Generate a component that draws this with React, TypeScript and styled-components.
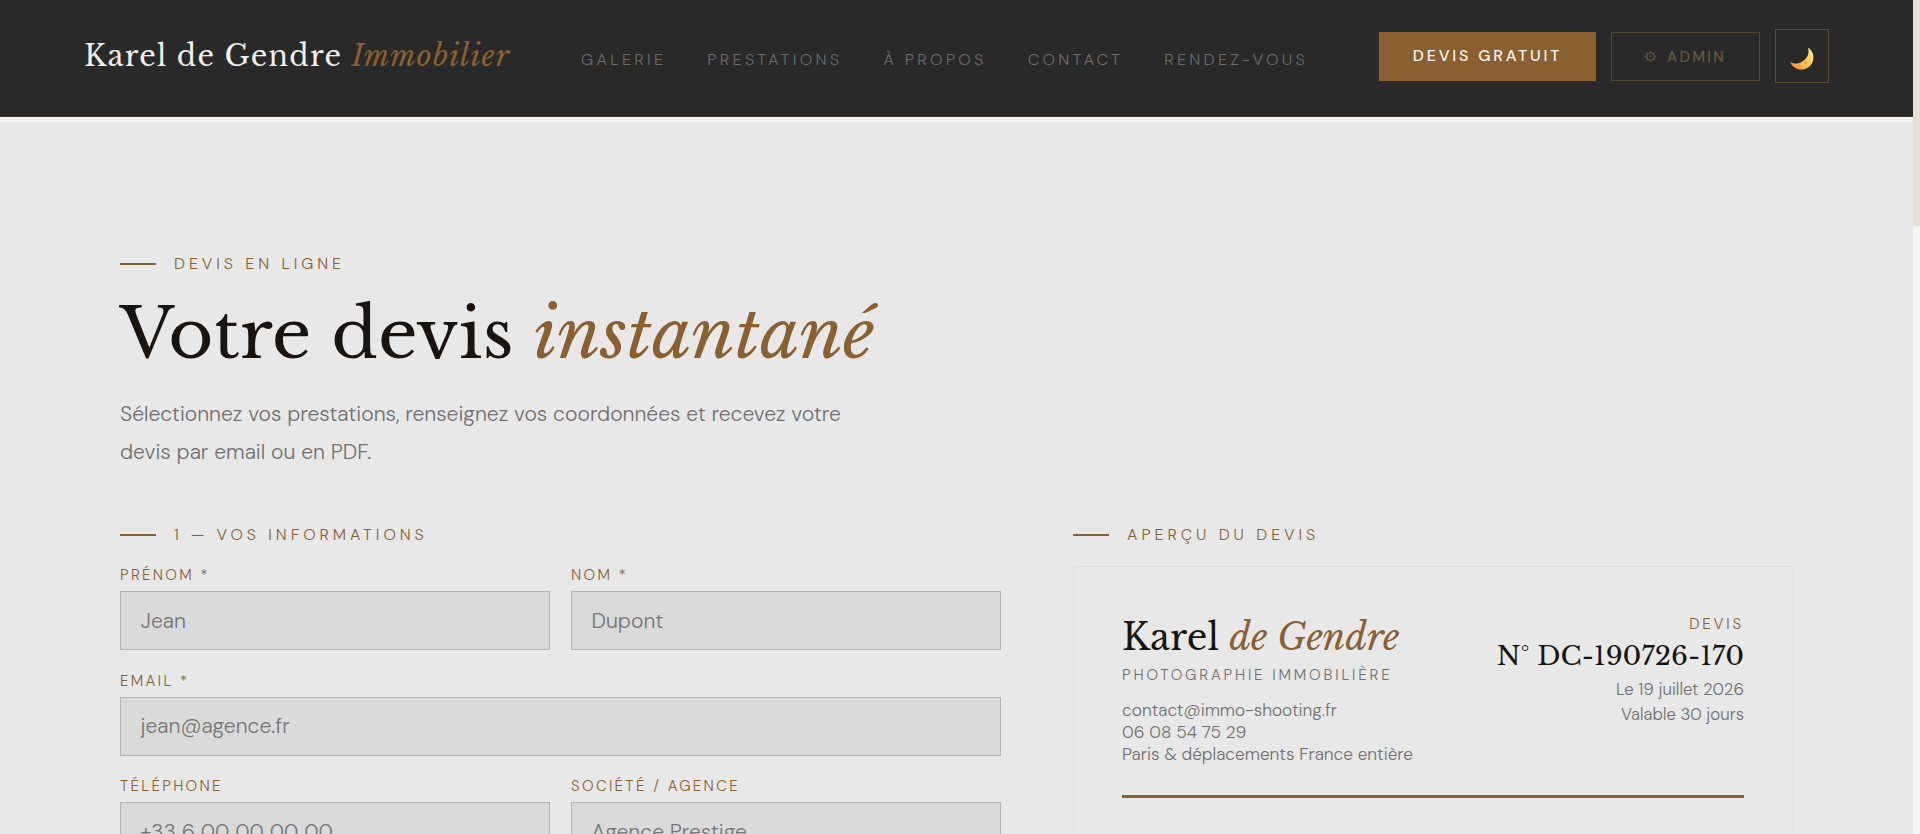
import React from 'react';
import styled, { createGlobalStyle } from 'styled-components';

const sans = '"DM Sans", Inter, "Liberation Sans", sans-serif';
const serif = '"Libre Baskerville", "Liberation Serif", serif';
const bronze = '#8b6030';

const GlobalStyle = createGlobalStyle`
  *, *::before, *::after { box-sizing: border-box; }
  body {
    margin: 0;
    overflow: hidden;
    background: #f5f5f5;
    color: #1a1410;
    font-family: ${sans};
    font-weight: 300;
  }
  h1, p { margin: 0; font-weight: inherit; }
`;

const Screen = styled.div`
  display: grid;
  grid-template-columns: 1fr 7px;
  height: 834px;
  overflow: hidden;
`;

const Page = styled.div`
  display: flex;
  flex-direction: column;
  gap: 5px;
  min-width: 0;
  height: 834px;
  overflow: hidden;
`;

const ScrollRail = styled.div`
  background: #f5f5f5;
`;

const ScrollThumb = styled.div`
  height: 226px;
  background: #e8dfd0;
`;

const Header = styled.header`
  display: flex;
  flex: none;
  align-items: center;
  justify-content: space-between;
  height: 117px;
  padding: 0 84px 4px;
  background: #292929;
  border-bottom: 1px solid #3d342a;
`;

const Brand = styled.a`
  font: 400 28.8px/36px ${serif};
  letter-spacing: 1.15px;
  color: #f0f0f0;
  white-space: nowrap;

  em { color: ${bronze}; }
`;

const Nav = styled.nav`
  display: flex;
  gap: 41px;
  padding-top: 8px;
`;

const NavLink = styled.a`
  font-size: 16.2px;
  line-height: 20px;
  letter-spacing: 3.24px;
  text-transform: uppercase;
  color: #6b6b6b;
  white-space: nowrap;
`;

const Actions = styled.div`
  display: flex;
  align-items: center;
  gap: 15px;
`;

const QuoteButton = styled.a`
  display: flex;
  align-items: center;
  justify-content: center;
  width: 217px;
  height: 49px;
  padding-bottom: 2px;
  background: ${bronze};
  color: #f5f5f5;
  font-size: 16px;
  font-weight: 500;
  letter-spacing: 2.8px;
  text-transform: uppercase;
  white-space: nowrap;
`;

const AdminButton = styled.a`
  display: flex;
  align-items: center;
  gap: 11px;
  width: 149px;
  height: 49px;
  padding: 1px 0 0 33px;
  border: 1px solid #50452f;
  color: #67573a;
  font-size: 15px;
  font-weight: 500;
  letter-spacing: 2.3px;
  text-transform: uppercase;
`;

const ThemeButton = styled.button`
  display: flex;
  align-items: center;
  justify-content: center;
  width: 54px;
  height: 54px;
  padding: 5px 0 0;
  border: 1px solid #5b4e36;
  background: transparent;
`;

const Main = styled.main`
  flex: 1 0 auto;
  padding: 132px 120px 0;
  background: #e8e8e8;
`;

const Eyebrow = styled.div`
  display: flex;
  align-items: center;
  gap: 18px;
  font-size: 16px;
  line-height: 20px;
  letter-spacing: 3.93px;
  text-transform: uppercase;
  color: ${bronze};

  &::before {
    content: '';
    width: 36px;
    height: 2px;
    background: ${bronze};
  }
`;

const Title = styled.h1`
  margin-top: 22px;
  font: 400 69.12px/76px ${serif};

  em { color: ${bronze}; }
`;

const Lead = styled.p`
  max-width: 756px;
  margin: 23px 0 54px;
  font-size: 21.12px;
  line-height: 38px;
  color: #707070;
`;

const Columns = styled.div`
  display: grid;
  grid-template-columns: 1fr 720px;
  gap: 72px;
`;

const Form = styled.form`
  display: grid;
  grid-template-columns: 1fr 1fr;
  gap: 20.6px 21px;
  margin-top: 20px;
`;

const Field = styled.label<{ $wide?: boolean }>`
  display: flex;
  flex-direction: column;
  gap: 6px;
  grid-column: ${(p) => (p.$wide ? '1 / -1' : 'auto')};
  font-size: 15px;
  line-height: 20px;
  letter-spacing: 2.32px;
  text-transform: uppercase;
  color: ${bronze};
`;

const Input = styled.input`
  width: 100%;
  height: 59px;
  padding: 0 19.5px;
  border: 1px solid #b5b5b5;
  border-radius: 0;
  background: #dadada;
  font: 300 21.12px ${sans};

  &::placeholder { color: #757575; }
`;

const QuoteCard = styled.section`
  height: 900px;
  margin-top: 21px;
  padding: 48px;
  border: 1px solid #e0ded6;
`;

const QuoteHead = styled.div`
  display: flex;
  justify-content: space-between;
  padding-bottom: 30px;
  border-bottom: 3px solid ${bronze};
  color: #707070;
`;

const QuoteBrand = styled.div`
  font: 400 36px/45px ${serif};
  color: #1a1410;

  em { color: ${bronze}; }
`;

const QuoteTagline = styled.div`
  margin: 6px 0 15px;
  font-size: 15px;
  line-height: 18px;
  letter-spacing: 2.82px;
  text-transform: uppercase;
`;

const ContactLine = styled.div`
  font-size: 17.28px;
  line-height: 22px;
`;

const QuoteMeta = styled.div`
  text-align: right;
`;

const MetaLabel = styled.div`
  font-size: 15px;
  line-height: 18px;
  letter-spacing: 2.82px;
  text-transform: uppercase;
  color: ${bronze};
`;

const QuoteNumber = styled.div`
  margin: 6px 0 5px;
  font: 400 26.4px/33px ${serif};
  color: #1a1410;
`;

const MetaLine = styled.div`
  font-size: 16.8px;
  line-height: 25px;
`;

const links = ['Galerie', 'Prestations', 'À propos', 'Contact', 'Rendez-vous'];

const fields = [
  { label: 'Prénom *', placeholder: 'Jean' },
  { label: 'Nom *', placeholder: 'Dupont' },
  { label: 'Email *', placeholder: 'jean@agence.fr', wide: true },
  { label: 'Téléphone', placeholder: '+33 6 00 00 00 00' },
  { label: 'Société / Agence', placeholder: 'Agence Prestige' },
];

const contacts = [
  'contact@immo-shooting.fr',
  '06 08 54 75 29',
  'Paris & déplacements France entière',
];

const teeth = [0, 45, 90, 135, 180, 225, 270, 315];

function GearIcon() {
  return (
    <svg width="11" height="11" viewBox="0 0 11 11" fill="none" stroke="currentColor">
      <circle cx="5.5" cy="5.5" r="3.7" strokeWidth="1.2" />
      <circle cx="5.5" cy="5.5" r="0.9" fill="currentColor" stroke="none" />
      {teeth.map((angle) => (
        <path key={angle} d="M5.5 0.1V1.6" strokeWidth="1.3" transform={`rotate(${angle} 5.5 5.5)`} />
      ))}
    </svg>
  );
}

function MoonIcon() {
  return (
    <svg width="24" height="23" viewBox="0 0 24 23">
      <defs>
        <linearGradient id="moon" x1="0" y1="18" x2="22" y2="4" gradientUnits="userSpaceOnUse">
          <stop offset="0" stopColor="#f58a45" />
          <stop offset="0.35" stopColor="#fdb04e" />
          <stop offset="0.7" stopColor="#ffcf66" />
          <stop offset="1" stopColor="#ffe58f" />
        </linearGradient>
      </defs>
      <path d="M18 .4A12.1 12.1 0 1 1 .2 15.2 12.7 12.7 0 0 0 18 .4Z" fill="url(#moon)" />
      <circle cx="15.8" cy="15.8" r="1.7" fill="#f5ae48" />
      <circle cx="19.8" cy="12" r="1" fill="#f9c057" />
      <circle cx="9.5" cy="18.8" r="1" fill="#f79d43" />
    </svg>
  );
}

export default function App() {
  return (
    <>
      <GlobalStyle />
      <Screen>
        <Page>
          <Header>
            <Brand>
              Karel de Gendre <em>Immobilier</em>
            </Brand>
            <Nav>
              {links.map((link) => (
                <NavLink key={link}>{link}</NavLink>
              ))}
            </Nav>
            <Actions>
              <QuoteButton>Devis gratuit</QuoteButton>
              <AdminButton>
                <GearIcon />
                Admin
              </AdminButton>
              <ThemeButton aria-label="Thème">
                <MoonIcon />
              </ThemeButton>
            </Actions>
          </Header>
          <Main>
            <Eyebrow>Devis en ligne</Eyebrow>
            <Title>
              Votre devis <em>instantané</em>
            </Title>
            <Lead>
              Sélectionnez vos prestations, renseignez vos coordonnées et recevez votre devis par
              email ou en PDF.
            </Lead>
            <Columns>
              <div>
                <Eyebrow>1 — Vos informations</Eyebrow>
                <Form>
                  {fields.map((field) => (
                    <Field key={field.label} $wide={field.wide}>
                      {field.label}
                      <Input placeholder={field.placeholder} />
                    </Field>
                  ))}
                </Form>
              </div>
              <div>
                <Eyebrow>Aperçu du devis</Eyebrow>
                <QuoteCard>
                  <QuoteHead>
                    <div>
                      <QuoteBrand>
                        Karel <em>de Gendre</em>
                      </QuoteBrand>
                      <QuoteTagline>Photographie immobilière</QuoteTagline>
                      {contacts.map((line) => (
                        <ContactLine key={line}>{line}</ContactLine>
                      ))}
                    </div>
                    <QuoteMeta>
                      <MetaLabel>Devis</MetaLabel>
                      <QuoteNumber>N° DC-190726-170</QuoteNumber>
                      <MetaLine>Le 19 juillet 2026</MetaLine>
                      <MetaLine>Valable 30 jours</MetaLine>
                    </QuoteMeta>
                  </QuoteHead>
                </QuoteCard>
              </div>
            </Columns>
          </Main>
        </Page>
        <ScrollRail>
          <ScrollThumb />
        </ScrollRail>
      </Screen>
    </>
  );
}
